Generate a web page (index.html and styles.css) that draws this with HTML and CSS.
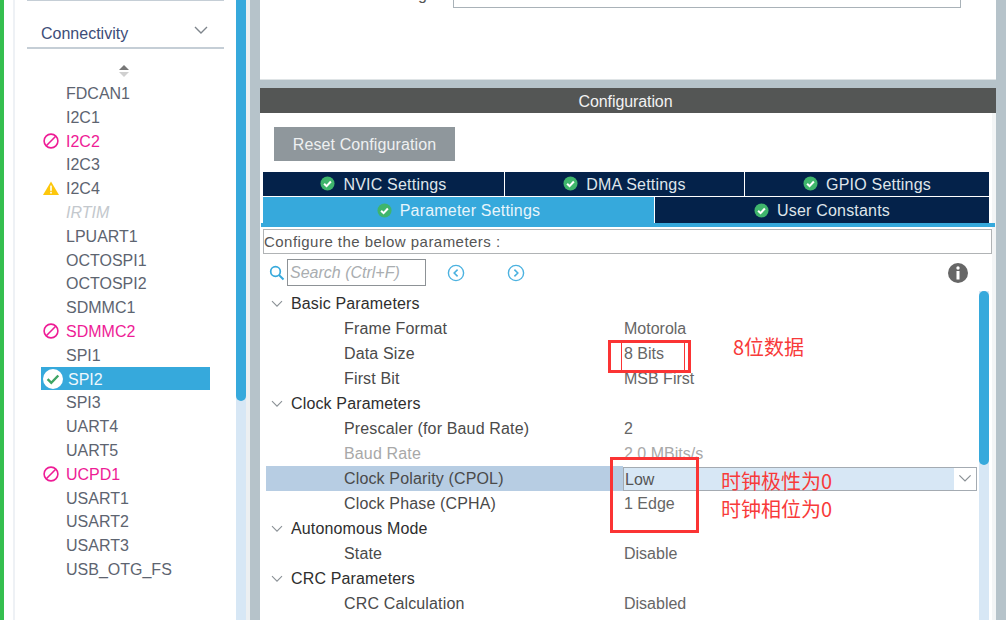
FILE: index.html
```html
<!DOCTYPE html>
<html lang="zh">
<head>
<meta charset="utf-8">
<title>Connectivity SPI2 Configuration</title>
<link rel="stylesheet" href="styles.css">
</head>
<body>
<svg class="defs" width="0" height="0" aria-hidden="true">
  <symbol id="ok" viewBox="0 0 16 16"><circle cx="8" cy="8" r="7.5" fill="#3fb56c"/><path d="M4.4 8.2l2.6 2.6 4.6-5" fill="none" stroke="#fff" stroke-width="2.2"/></symbol>
  <symbol id="ban" viewBox="0 0 16 16"><circle cx="8" cy="8" r="6.9" fill="none" stroke="#ee1c96" stroke-width="1.6"/><path d="M3.3 12.7L12.7 3.3" stroke="#ee1c96" stroke-width="1.6"/></symbol>
  <symbol id="chev" viewBox="0 0 12 8"><path d="M1 1.2l5 5 5-5" fill="none" stroke="#8b9196" stroke-width="1.1"/></symbol>
</svg>
<div class="strip"></div>
<div class="gutter"></div>
<aside class="sidebar">
  <div class="side-head"><span>Connectivity</span><svg class="side-chev" viewBox="0 0 14 9"><path d="M1 1l6 6 6-6" fill="none" stroke="#7e858c" stroke-width="1.4"/></svg></div>
  <div class="sort"><svg width="12" height="14" viewBox="0 0 12 14"><path d="M6 1l5 5H1z" fill="#777"/><path d="M1 8h10l-5 5z" fill="#d0d0d0"/></svg></div>
  <ul class="list">
    <li>FDCAN1</li>
    <li>I2C1</li>
    <li class="bad"><svg class="ico"><use href="#ban"/></svg>I2C2</li>
    <li>I2C3</li>
    <li><svg class="ico" viewBox="0 0 16 16"><path d="M8 1.4L16 15H0z" fill="#fdc70c"/><rect x="7.2" y="5.6" width="1.6" height="5.2" fill="#fff"/><rect x="7.2" y="11.8" width="1.6" height="1.7" fill="#fff"/></svg>I2C4</li>
    <li class="off">IRTIM</li>
    <li>LPUART1</li>
    <li>OCTOSPI1</li>
    <li>OCTOSPI2</li>
    <li>SDMMC1</li>
    <li class="bad"><svg class="ico"><use href="#ban"/></svg>SDMMC2</li>
    <li>SPI1</li>
    <li class="sel"><svg class="ico-big" viewBox="0 0 20 20"><circle cx="10" cy="10" r="10" fill="#fff"/><path d="M4.6 10.2l3.7 3.7 7-7.4" fill="none" stroke="#3fa565" stroke-width="2.4"/></svg>SPI2</li>
    <li>SPI3</li>
    <li>UART4</li>
    <li>UART5</li>
    <li class="bad"><svg class="ico"><use href="#ban"/></svg>UCPD1</li>
    <li>USART1</li>
    <li>USART2</li>
    <li>USART3</li>
    <li>USB_OTG_FS</li>
  </ul>
</aside>
<div class="side-scroll"><div class="side-thumb"></div></div>
<div class="sep"></div>
<main class="main">
  <section class="top-panel">
    <span class="top-label">g</span>
    <div class="top-input"></div>
  </section>
  <section class="config">
    <h2 class="config-title">Configuration</h2>
    <button class="reset">Reset Configuration</button>
    <div class="tabs tabs-a">
      <div class="tab"><svg class="tick"><use href="#ok"/></svg>NVIC Settings</div>
      <div class="tab"><svg class="tick"><use href="#ok"/></svg>DMA Settings</div>
      <div class="tab"><svg class="tick"><use href="#ok"/></svg>GPIO Settings</div>
    </div>
    <div class="tabs tabs-b">
      <div class="tab active"><svg class="tick"><use href="#ok"/></svg>Parameter Settings</div>
      <div class="tab"><svg class="tick"><use href="#ok"/></svg>User Constants</div>
    </div>
    <div class="tab-line"></div>
    <div class="hint">Configure the below parameters :</div>
    <div class="search-row">
      <svg class="search-ico" viewBox="0 0 16 16"><circle cx="6.5" cy="6.5" r="4.8" fill="none" stroke="#36a9dc" stroke-width="1.7"/><path d="M10 10l4.5 4.5" stroke="#36a9dc" stroke-width="1.9"/></svg>
      <div class="search">Search (Ctrl+F)</div>
      <svg class="nav nav-prev" viewBox="0 0 18 18"><circle cx="9" cy="9" r="7.6" fill="none" stroke="#4cb2e0" stroke-width="1.4"/><path d="M10.6 5.6L7.2 9l3.4 3.4" fill="none" stroke="#4cb2e0" stroke-width="1.6"/></svg>
      <svg class="nav nav-next" viewBox="0 0 18 18"><circle cx="9" cy="9" r="7.6" fill="none" stroke="#4cb2e0" stroke-width="1.4"/><path d="M7.4 5.6L10.8 9l-3.4 3.4" fill="none" stroke="#4cb2e0" stroke-width="1.6"/></svg>
      <svg class="info" viewBox="0 0 20 20"><circle cx="10" cy="10" r="10" fill="#666"/><circle cx="10" cy="5" r="1.7" fill="#fff"/><rect x="8.5" y="8" width="3" height="8.5" fill="#fff"/></svg>
    </div>
    <div class="tree-wrap">
      <div class="tree">
        <div class="row group"><svg class="tw"><use href="#chev"/></svg>Basic Parameters</div>
        <div class="row"><span class="name">Frame Format</span><span class="val">Motorola</span></div>
        <div class="row"><span class="name">Data Size</span><span class="val">8 Bits</span></div>
        <div class="row"><span class="name">First Bit</span><span class="val">MSB First</span></div>
        <div class="row group"><svg class="tw"><use href="#chev"/></svg>Clock Parameters</div>
        <div class="row"><span class="name">Prescaler (for Baud Rate)</span><span class="val">2</span></div>
        <div class="row muted"><span class="name">Baud Rate</span><span class="val">2.0 MBits/s</span></div>
        <div class="row picked"><span class="name">Clock Polarity (CPOL)</span><span class="select"><span class="select-val">Low</span><span class="select-btn"><svg class="tw-sel"><use href="#chev"/></svg></span></span></div>
        <div class="row"><span class="name">Clock Phase (CPHA)</span><span class="val">1 Edge</span></div>
        <div class="row group"><svg class="tw"><use href="#chev"/></svg>Autonomous Mode</div>
        <div class="row"><span class="name">State</span><span class="val">Disable</span></div>
        <div class="row group"><svg class="tw"><use href="#chev"/></svg>CRC Parameters</div>
        <div class="row"><span class="name">CRC Calculation</span><span class="val">Disabled</span></div>
      </div>
      <div class="tree-scroll"><div class="tree-thumb"></div></div>
    </div>
  </section>
</main>
<div class="edge"></div>
<div class="mark mark-a"><i class="mark-line mark-l"></i><i class="mark-line mark-r"></i></div>
<div class="mark mark-b"></div>
<div class="note note-a">8位数据</div>
<div class="note note-b">时钟极性为0</div>
<div class="note note-c">时钟相位为0</div>
</body>
</html>
```

FILE: styles.css
```css
* { box-sizing: border-box; }
html, body { margin: 0; padding: 0; }
body {
  position: relative;
  display: flex;
  width: 1007px;
  height: 620px;
  overflow: hidden;
  background: #b6c3ca;
  font-family: "Liberation Sans", Arial, sans-serif;
  font-size: 16px;
  color: #444;
}
.defs { position: absolute; }
.strip { width: 4px; background: #35bf4f; flex: none; }
.gutter { width: 11px; background: #fff; border-right: 2px solid #eef1f5; flex: none; }
.sidebar { width: 221px; background: #fff; padding-left: 12px; flex: none; }
.side-head {
  width: 197px;
  height: 49px;
  padding: 24px 14px 0;
  border-top: 1px solid #c5ced6;
  border-bottom: 2px solid #c5ced6;
  display: flex;
  justify-content: space-between;
  color: #3d4d78;
  font-size: 16px;
}
.side-chev { width: 14px; height: 9px; margin: 1px 2px 0 0; }
.sort { width: 197px; height: 32px; padding: 15px 0 0 91px; line-height: 0; }
.list { list-style: none; margin: 0 0 0 14px; padding: 0; width: 169px; }
.list li {
  position: relative;
  height: 23.8px;
  line-height: 25.6px;
  padding-left: 25px;
  color: #5d6470;
  font-size: 16px;
  white-space: nowrap;
}
.list .bad { color: #ee1c96; }
.list .off { color: #c3c8cd; font-style: italic; }
.list .sel { background: #36a9dc; color: #eef8fd; padding-left: 27px; }
.ico { position: absolute; left: 2px; top: 4px; width: 16px; height: 16px; }
.ico-big { position: absolute; left: 2px; top: 2px; width: 20px; height: 20px; }
.side-scroll { width: 10px; background: #d7e7f5; flex: none; }
.side-thumb { height: 401px; background: #36a9dc; border-radius: 0 0 5px 5px; }
.sep { width: 4px; background: #eceff1; flex: none; }
.main { width: 736px; margin-left: 10px; flex: none; display: flex; flex-direction: column; }
.top-panel {
  height: 80px;
  background: #fff;
  border-bottom: 1px solid #dfe4e6;
  display: flex;
  align-items: flex-start;
  overflow: hidden;
}
.top-label { margin: -14px 0 0 158px; width: 35px; font-size: 16px; color: #555; }
.top-input { width: 508px; height: 8px; background: #fff; border: 1px solid #a9b2b8; border-top: 0; }
.config { margin-top: 8px; flex: 1; background: #fff; min-height: 0; border-right: 4px solid #f3f5f6; }
.config-title {
  margin: 0 -4px 0 0;
  height: 25px;
  padding-right: 5px;
  line-height: 27px;
  background: #545655;
  color: #f2f2f2;
  font-size: 16px;
  font-weight: 400;
  text-align: center;
  letter-spacing: -0.1px;
}
.reset {
  display: block;
  width: 181px;
  height: 34px;
  margin: 14px 0 0 14px;
  padding: 1px 0 0;
  border: 0;
  background: #8f979c;
  color: #eef0f1;
  font: 16px "Liberation Sans", Arial, sans-serif;
  letter-spacing: 0.1px;
}
.tabs { display: grid; gap: 1px; margin-left: 3px; width: 726px; }
.tabs-a { grid-template-columns: 241px 239px 244px; margin-top: 11px; height: 24px; }
.tabs-b { grid-template-columns: 391px 334px; margin-top: 1px; height: 26px; }
.tab {
  background: #04224a;
  color: #dfe5ea;
  display: flex;
  align-items: center;
  justify-content: center;
  padding-top: 2px;
  font-size: 16px;
  letter-spacing: 0.2px;
  white-space: nowrap;
}
.tabs-b .tab { padding-top: 1px; }
.tab.active { background: #36a9dc; color: #e8f5fb; }
.tick { width: 15px; height: 15px; margin: -3px 8px 0 0; flex: none; }
.tabs-b .tick { margin-top: -1px; }
.tab-line { height: 4px; width: 734px; margin-left: 1px; background: #36a9dc; }
.hint {
  width: 729px;
  height: 25px;
  margin: 2px 0 0 3px;
  line-height: 23px;
  border: 1px solid #b0b3b5;
  color: #555;
  font-size: 15px;
  letter-spacing: 0.46px;
  white-space: nowrap;
}
.search-row { height: 37px; display: flex; align-items: center; }
.search-ico { width: 16px; height: 16px; margin-left: 9px; flex: none; }
.search {
  width: 139px;
  height: 27px;
  margin-left: 2px;
  padding-left: 2px;
  border: 1px solid #8d9296;
  line-height: 25px;
  color: #a9adb0;
  font-style: italic;
  font-size: 16px;
  white-space: nowrap;
}
.nav { width: 18px; height: 18px; flex: none; }
.nav-prev { margin-left: 21px; }
.nav-next { margin-left: 42px; }
.info { width: 20px; height: 20px; margin-left: 423px; flex: none; }
.tree-wrap { display: flex; margin-left: 6px; width: 723px; }
.tree { width: 713px; flex: none; }
.row {
  position: relative;
  height: 25px;
  display: flex;
  align-items: center;
  padding-left: 78px;
  padding-top: 1px;
  color: #4a4a4a;
  font-size: 16px;
  letter-spacing: 0.15px;
  white-space: nowrap;
}
.row.group { padding-left: 25px; color: #2e2e2e; }
.tw { position: absolute; left: 5px; top: 9px; width: 12px; height: 8px; }
.name { width: 279px; flex: none; }
.val { padding-left: 1px; color: #666; letter-spacing: 0; }
.muted .name, .muted .val { color: #a8a8a8; }
.picked { padding-top: 0; background: linear-gradient(90deg, #b7cde3 357px, transparent 357px); }
.select {
  width: 354px;
  height: 24px;
  display: flex;
  justify-content: space-between;
  background: #d7e7f5;
  border: 1px solid #a4abb2;
  letter-spacing: 0;
}
.select-val { padding-left: 1px; line-height: 24px; color: #555; }
.select-btn { width: 22px; background: #fff; display: flex; align-items: center; justify-content: center; }
.tw-sel { width: 14px; height: 9px; }
.tree-scroll { width: 10px; height: 329px; background: #d7e7f5; }
.tree-thumb { height: 174px; background: #36a9dc; border-radius: 5px; }
.edge { width: 1px; margin-left: 10px; background: #fff; flex: none; }
.mark { position: absolute; border: 3px solid #fb3434; }
.mark-a { left: 608px; top: 340px; width: 83px; height: 33px; }
.mark-b { left: 610px; top: 457px; width: 89px; height: 76px; }
.mark-line { position: absolute; top: 0; bottom: 0; width: 1px; background: #fb3434; }
.mark-l { left: 10px; }
.mark-r { left: 73px; }
.note {
  position: absolute;
  color: #f83a3a;
  font-family: "Noto Sans CJK SC", "Liberation Sans", sans-serif;
  font-size: 20px;
  line-height: 24px;
  white-space: nowrap;
}
.note-a { left: 733px; top: 335px; }
.note-b { left: 721px; top: 469px; }
.note-c { left: 721px; top: 497px; }
```
